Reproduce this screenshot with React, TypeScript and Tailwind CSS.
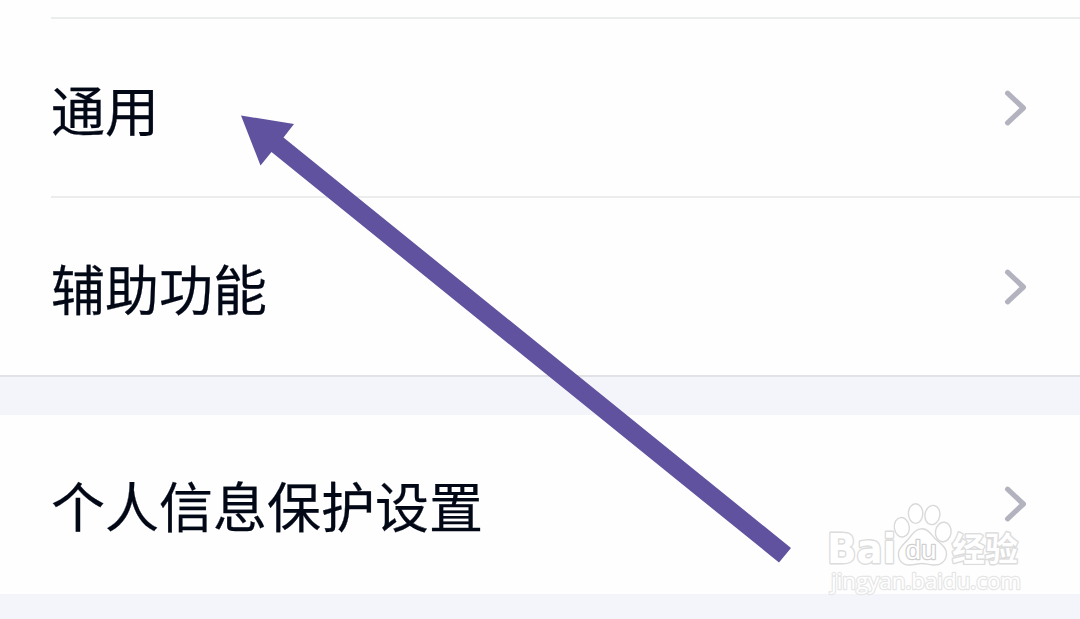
const paws = [
    { cx: 901.8, cy: 527.3, rx: 7.5, ry: 9.8, rotate: -8 },
    { cx: 915.6, cy: 513.6, rx: 7.2, ry: 9.8, rotate: 0 },
    { cx: 932.4, cy: 515, rx: 7.4, ry: 9.7, rotate: 10 },
    { cx: 943.3, cy: 532, rx: 7.8, ry: 9.8, rotate: 8 },
];

const IconChevron = ({ className }: { className?: string }) => (
    <svg viewBox="0 0 24 38" fill="none" className={className}>
        <path
            d="M3.6 4.2 L19.4 19 L3.6 33.8"
            stroke="#b3b3c0"
            strokeWidth="5.2"
            strokeLinecap="round"
            strokeLinejoin="round"
        />
    </svg>
);

const SettingItem = ({ title }: { title: string }) => (
    <div className="flex h-[177px] items-center justify-between pl-[51px] pr-[52px]">
        <span className="pt-[3px] text-[54px] leading-[60px] text-[#030817] [-webkit-text-stroke:0.25px_#030817]">
            {title}
        </span>
        <IconChevron className="h-[38px] w-6" />
    </div>
);

const Arrow = () => (
    <svg
        viewBox="0 0 1080 619"
        className="pointer-events-none absolute inset-0 h-full w-full"
    >
        <path
            d="M241 115.5 L294 124 L283.5 137.5 L791 548 L779 562.5 L271.5 152 L260.5 165.5 Z"
            fill="#60529f"
        />
    </svg>
);

const Watermark = () => (
    <svg
        viewBox="0 0 1080 619"
        className="pointer-events-none absolute inset-0 h-full w-full"
        fill="#ffffff"
        stroke="#dcdcdc"
        strokeWidth="2.8"
        strokeLinejoin="round"
        paintOrder="stroke"
    >
        <text
            x="827"
            y="563"
            fontSize="41"
            fontWeight="700"
            textLength="69"
            lengthAdjust="spacingAndGlyphs"
            fontFamily='"DejaVu Sans", sans-serif'
        >
            Bai
        </text>
        <g stroke="#d9d9d9" strokeWidth="1.4" paintOrder="normal">
            {paws.map((paw) => (
                <ellipse
                    key={paw.cx}
                    cx={paw.cx}
                    cy={paw.cy}
                    rx={paw.rx}
                    ry={paw.ry}
                    transform={`rotate(${paw.rotate} ${paw.cx} ${paw.cy})`}
                />
            ))}
            <path d="M922 528.8 C929 528.8 931 535 936 539.5 C941 544 947 548 946.5 554 C946 562 940 565.5 933 565 C928 564.5 925 563.5 922 563.5 C918 563.5 914 565 909 565 C902 565 898 560 898.5 553 C899 547 904 544 908 539.5 C912 535 915 528.8 922 528.8 Z" />
        </g>
        <text
            x="905.5"
            y="558.5"
            fontSize="26"
            textLength="31"
            lengthAdjust="spacingAndGlyphs"
            stroke="#cfcfcf"
            strokeWidth="2.4"
            fontFamily='"Liberation Sans", sans-serif'
        >
            du
        </text>
        <text
            x="952"
            y="560.5"
            fontSize="33"
            fontWeight="700"
            fontFamily='"Liberation Sans", "Noto Sans CJK SC", sans-serif'
        >
            经验
        </text>
        <text
            x="831"
            y="589"
            fontSize="22"
            textLength="190"
            lengthAdjust="spacingAndGlyphs"
            stroke="#e6e6e6"
            strokeWidth="2.4"
            fontFamily='"Open Sans", sans-serif'
        >
            jingyan.baidu.com
        </text>
    </svg>
);

const App = () => {
    return (
        <div className="relative h-[619px] w-[1080px] overflow-hidden bg-[#f4f5fa] font-['Noto_Sans_CJK_SC',sans-serif]">
            <div className="border-b-2 border-[#e1e2e5] bg-[#fefefe] pt-[17px]">
                <div className="ml-[51px] h-0.5 bg-[#ebedec]" />
                <SettingItem title="通用" />
                <div className="ml-[51px] h-0.5 bg-[#ebedec]" />
                <SettingItem title="辅助功能" />
            </div>
            <div className="mt-[38px] bg-[#fefefe] pb-0.5">
                <SettingItem title="个人信息保护设置" />
            </div>
            <Arrow />
            <Watermark />
        </div>
    );
};

export default App;
